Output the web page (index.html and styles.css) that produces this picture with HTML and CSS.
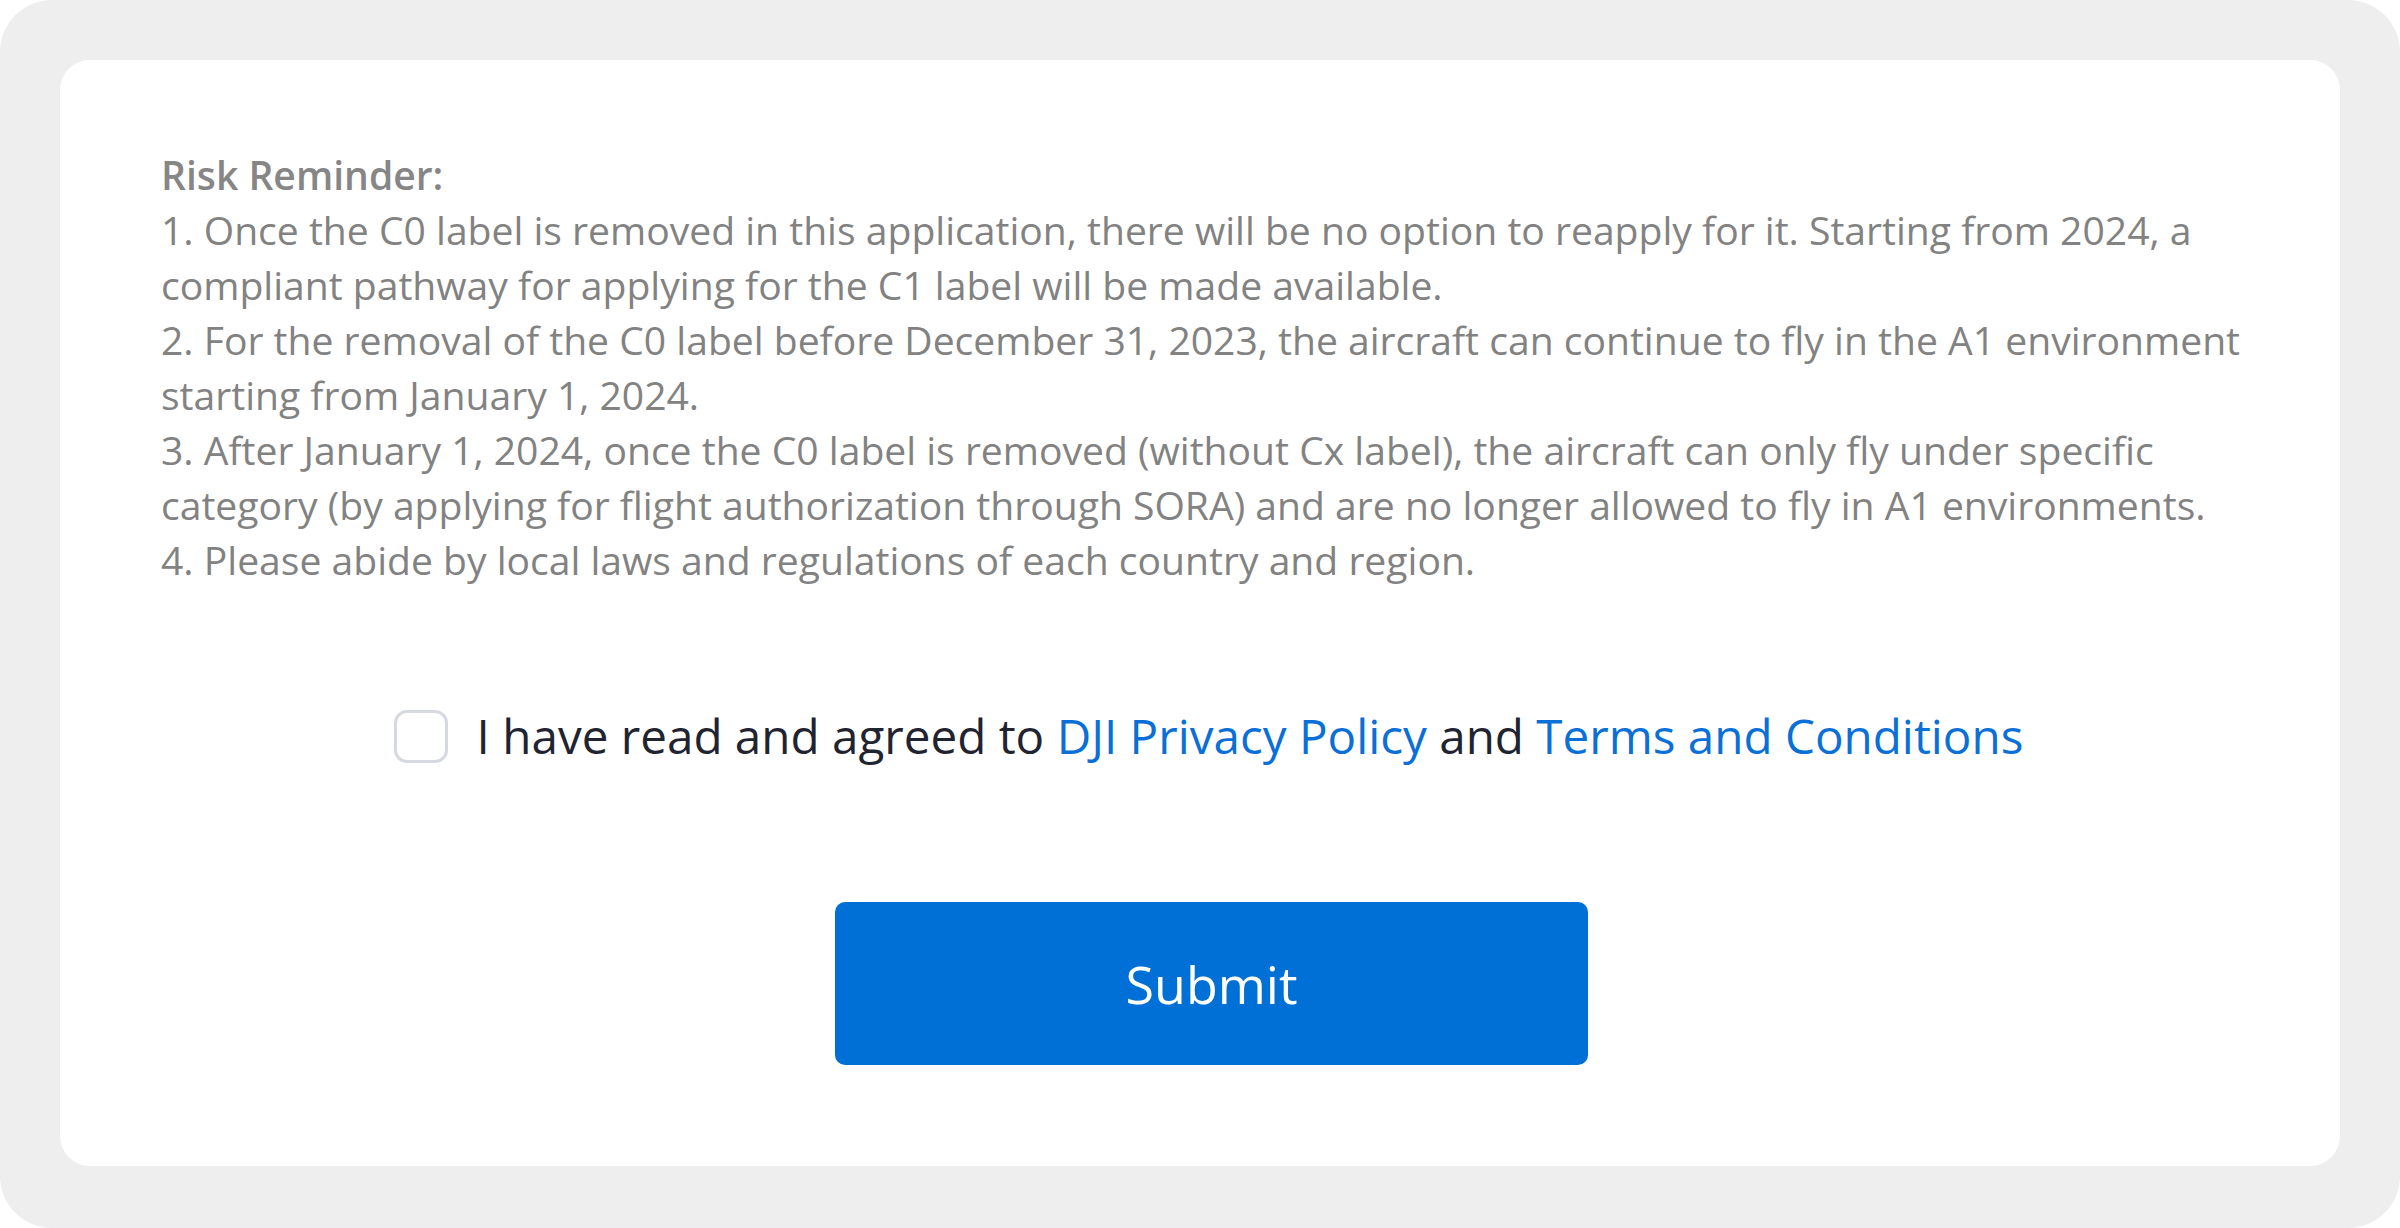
FILE: index.html
```html
<!DOCTYPE html>
<html lang="en">
<head>
<meta charset="utf-8">
<title>Risk Reminder</title>
<link rel="stylesheet" href="styles.css">
</head>
<body>
<div class="frame">
  <div class="card">
    <div class="reminder">
      <p class="title">Risk Reminder:</p>
      <p>1. Once the C0 label is removed in this application, there will be no option to reapply for it. Starting from 2024, a compliant pathway for applying for the C1 label will be made available.</p>
      <p>2. For the removal of the C0 label before December 31, 2023, the aircraft can continue to fly in the A1 environment starting from January 1, 2024.</p>
      <p>3. After January 1, 2024, once the C0 label is removed (without Cx label), the aircraft can only fly under specific category (by applying for flight authorization through SORA) and are no longer allowed to fly in A1 environments.</p>
      <p>4. Please abide by local laws and regulations of each country and region.</p>
    </div>
    <label class="agree">
      <span class="box"></span>
      <span class="agree-text">I have read and agreed to <a href="#" class="link">DJI Privacy Policy</a> and <a href="#" class="link">Terms and Conditions</a></span>
    </label>
    <div class="actions">
      <button class="submit" type="button">Submit</button>
    </div>
  </div>
</div>
</body>
</html>
```

FILE: styles.css
```css
* { box-sizing: border-box; }
html, body {
  margin: 0;
  padding: 0;
  background: #ffffff;
  font-family: "Open Sans", "Noto Sans", sans-serif;
}
.frame {
  width: 2400px;
  height: 1228px;
  background: #eeeeee;
  border-radius: 52px;
  padding: 60px 60px 62px 60px;
}
.card {
  background: #ffffff;
  border-radius: 30px;
  height: 100%;
  padding: 87px 60px 0 101px;
  display: flex;
  flex-direction: column;
}
.reminder {
  color: #828282;
  font-size: 39.1px;
  line-height: 55px;
}
.reminder p { margin: 0; }
.reminder .title { font-weight: 600; color: #868686; }
.agree {
  display: flex;
  align-items: center;
  justify-content: center;
  gap: 29px;
  margin-top: 119px;
  padding-right: 24px;
  cursor: pointer;
}
.box {
  width: 54px;
  height: 53px;
  border: 3px solid #d6d9df;
  border-radius: 13px;
  flex: none;
}
.agree-text {
  font-size: 47.6px;
  line-height: 60px;
  color: #1f2430;
}
.link {
  color: #0a6fd6;
  text-decoration: none;
}
.actions {
  display: flex;
  justify-content: center;
  margin-top: 136px;
  padding-right: 18px;
}
.submit {
  width: 753px;
  height: 163px;
  background: #0070d7;
  border: none;
  border-radius: 10px;
  color: #ffffff;
  font-family: "Open Sans", "Noto Sans", sans-serif;
  font-size: 52px;
  cursor: pointer;
}
```
